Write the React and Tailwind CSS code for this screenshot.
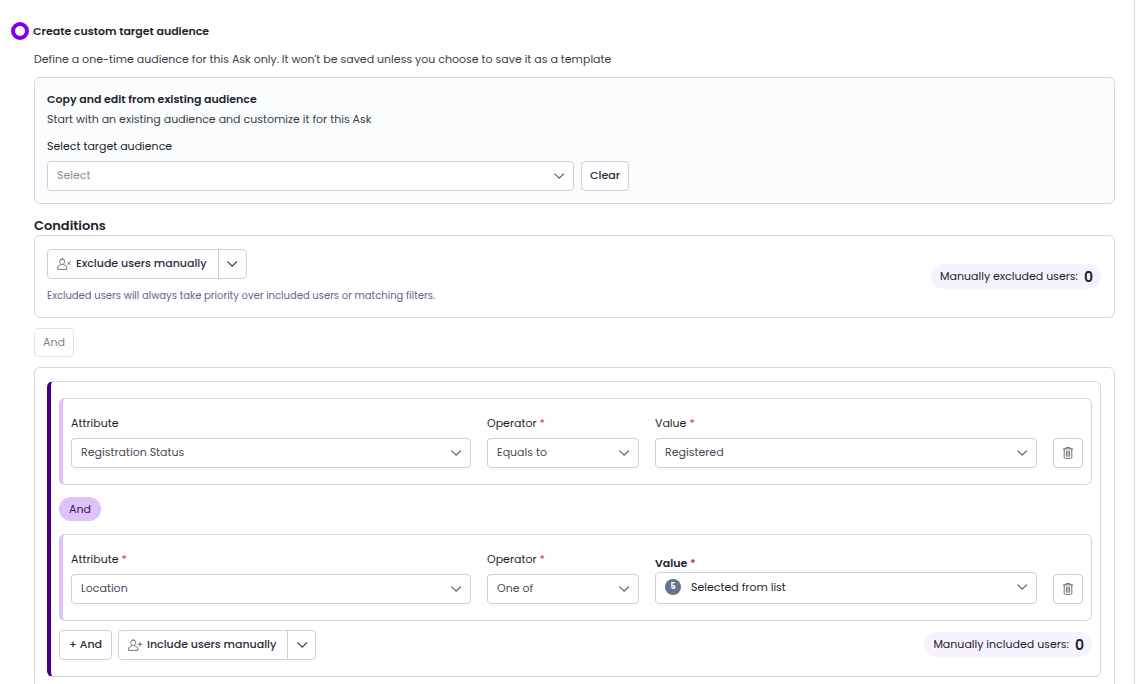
import React from "react";

function Chevron({ className = "" }) {
  return (
    <svg viewBox="0 0 12 12" className={`size-3 ${className}`} fill="none" stroke="currentColor" strokeWidth="1.2" strokeLinecap="round" strokeLinejoin="round" aria-hidden="true">
      <path d="M1.800 3.900 6.200 8.100l4.400-4.200" />
    </svg>
  );
}

function UserIcon({ mark }) {
  return (
    <svg viewBox="0 0 15 14" className="h-3.5 w-[15px] shrink-0 text-[#4b4f5c]" fill="none" stroke="currentColor" strokeWidth="0.8" strokeLinecap="round" strokeLinejoin="round" aria-hidden="true">
      <path d="M5.200 1.900a2.500 2.500 0 0 1 2.500 2.600c0 1.600-1.100 3-2.500 3s-2.500-1.400-2.500-3a2.500 2.500 0 0 1 2.500-2.600Z" />
      <path d="M3.700 7.800C1.900 8.300.6 9.300.6 11.100v1.300h9.200v-1.300c0-1.800-1.300-2.800-3.100-3.300" />
      {mark === "plus" ? <path d="M12 4.200v4M10 6.200h4" /> : <path d="m10.600 7.700 3-3M10.900 5.300l.8.700M12.700 6.900l.7.600" />}
    </svg>
  );
}

function TrashIcon() {
  return (
    <svg viewBox="0 0 12 14" className="h-3.5 w-3" fill="none" stroke="currentColor" strokeWidth="0.8" strokeLinecap="round" strokeLinejoin="round" aria-hidden="true">
      <path d="M1.500 2.900h9M4.200 2.700V1.500h3.600v1.200M2.200 3.100v8c0 .9.500 1.400 1.400 1.400h4.800c.9 0 1.400-.5 1.400-1.400v-8M4.400 5v5.400M6 5v5.400M7.600 5v5.400" />
    </svg>
  );
}

function Select({ id, value, options = [], muted = false }) {
  return (
    <div className="grid items-center">
      <select
        id={id}
        defaultValue={value}
        className={`col-start-1 row-start-1 h-[30px] w-full appearance-none rounded border border-[#cdd1d8] bg-white pr-8 pb-0.5 pl-[9px] text-[11px] ${muted ? "text-[#8b8f9a]" : "text-[#454b57]"}`}
      >
        {[value, ...options].map((option) => (
          <option key={option}>{option}</option>
        ))}
      </select>
      <Chevron className="pointer-events-none col-start-1 row-start-1 mr-[9px] justify-self-end text-[#555b66]" />
    </div>
  );
}

function Label({ htmlFor, required, bold, children }) {
  return (
    <label htmlFor={htmlFor} className={`block text-[11px] leading-[18px] text-[#1d1f27] ${bold ? "font-semibold" : "mb-1.5"}`}>
      {children}
      {required && <span className="text-[#e0245e]"> *</span>}
    </label>
  );
}

function SplitButton({ mark, children, menuLabel }) {
  return (
    <div className="flex h-[30px] rounded border border-[#cdd1d8] bg-white">
      <button type="button" className="flex items-center gap-1 pr-[11px] pl-[9px] text-[11px] font-medium text-[#2b2d42]">
        <UserIcon mark={mark} />
        <span className="pb-0.5">{children}</span>
      </button>
      <button type="button" aria-label={menuLabel} className="flex w-7 items-center justify-center border-l border-[#cdd1d8] text-[#33363f]">
        <Chevron />
      </button>
    </div>
  );
}

function CountPill({ label, count }) {
  return (
    <p className="flex h-[25px] items-center gap-1.5 rounded-full bg-[#f6f2ff] pr-2 pl-[9px] text-[11px] text-[#1d1b2e]">
      {label} <span className="text-sm font-semibold">{count}</span>
    </p>
  );
}

function RuleRow({ children }) {
  return (
    <div className="grid grid-cols-[400fr_152fr_382fr_30px] items-end gap-4 rounded-md border border-l-4 border-[#d5d8dd] border-l-[#dfc2f9] px-2 pt-[15px] pb-4">
      {children}
      <button type="button" aria-label="Delete condition" className="flex size-[30px] items-center justify-center rounded border border-[#cdd1d8] text-[#4b4f5c]">
        <TrashIcon />
      </button>
    </div>
  );
}

export default function App() {
  return (
    <div className="h-screen overflow-hidden bg-white pr-[3px] font-['Poppins','Inter',sans-serif] text-[#22242b]">
      <main className="min-h-full border-r border-[#d5d8dd] pr-[19px] pl-[34px]">
        <div className="-ml-6 flex items-center gap-1 pt-[21px]">
          <input
            id="custom-audience"
            type="radio"
            name="audience"
            defaultChecked
            className="ml-px size-[18px] appearance-none rounded-full border-[4px] border-[#7d00ea] bg-white"
          />
          <label htmlFor="custom-audience" className="text-[11px] leading-5 font-semibold">
            Create custom target audience
          </label>
        </div>
        <p className="mt-2 text-[11px] leading-5 text-[#3a3d45]">
          Define a one-time audience for this Ask only. It won't be saved unless you choose to save it as a template
        </p>

        <section className="mt-2 rounded-md border border-[#d3d7de] bg-[#fbfcfe] pt-[11px] pr-[13px] pb-3 pl-3">
          <h2 className="text-[11px] leading-5 font-semibold">Copy and edit from existing audience</h2>
          <p className="mb-2 text-[11px] leading-5 text-[#3a3d45]">Start with an existing audience and customize it for this Ask</p>
          <Label htmlFor="target">Select target audience</Label>
          <div className="flex gap-[7px]">
            <div className="w-1/2">
              <Select id="target" value="Select" muted />
            </div>
            <button type="button" className="h-[30px] rounded border border-[#cdd1d8] bg-white px-2 pb-0.5 text-[11px] font-medium text-[#2b2d42]">
              Clear
            </button>
          </div>
        </section>

        <h2 className="mt-3 text-[13px] leading-[19px] font-semibold">Conditions</h2>
        <section className="flex items-center justify-between rounded-md border border-[#d5d8dd] py-[13px] pr-[13px] pl-3">
          <div>
            <div className="flex">
              <SplitButton mark="cross" menuLabel="More exclude options">Exclude users manually</SplitButton>
            </div>
            <p className="mt-2 text-[10px] leading-[17px] text-[#63668a]">
              Excluded users will always take priority over included users or matching filters.
            </p>
          </div>
          <CountPill label="Manually excluded users:" count={0} />
        </section>

        <button type="button" disabled className="mt-2.5 block h-[29px] rounded border border-[#e1e4e8] px-2 text-[11px] text-[#7c818b]">
          And
        </button>

        <section className="mt-2.5 rounded-md border border-[#d5d8dd] py-[13px] pr-[13px] pl-3">
          <div className="rounded-md border border-l-4 border-[#d5d8dd] border-l-[#46007d] px-2 py-4">
            <RuleRow>
              <div>
                <Label htmlFor="attribute-1">Attribute</Label>
                <Select id="attribute-1" value="Registration Status" options={["Location"]} />
              </div>
              <div>
                <Label htmlFor="operator-1" required>Operator</Label>
                <Select id="operator-1" value="Equals to" options={["One of"]} />
              </div>
              <div>
                <Label htmlFor="value-1" required>Value</Label>
                <Select id="value-1" value="Registered" />
              </div>
            </RuleRow>

            <p className="mt-3 mb-[13px] flex h-6 w-fit items-center rounded-full bg-[#dfc2f9] px-2.5 text-[11px] text-[#2a2140]">And</p>

            <RuleRow>
              <div>
                <Label htmlFor="attribute-2" required>Attribute</Label>
                <Select id="attribute-2" value="Location" options={["Registration Status"]} />
              </div>
              <div>
                <Label htmlFor="operator-2" required>Operator</Label>
                <Select id="operator-2" value="One of" options={["Equals to"]} />
              </div>
              <div>
                <Label htmlFor="value-2" required bold>Value</Label>
                <button id="value-2" type="button" className="flex h-8 w-full items-center rounded border border-[#cdd1d8] pr-2 pb-0.5 pl-[9px] text-[11px] text-[#1d1f27]">
                  <span className="mr-2.5 flex size-4 items-center justify-center rounded-full bg-[#64748b] text-[8px] leading-4 font-bold text-white">5</span>
                  Selected from list
                  <Chevron className="ml-auto text-[#555b66]" />
                </button>
              </div>
            </RuleRow>

            <div className="mt-[9px] flex items-start justify-between">
              <div className="flex gap-1.5">
                <button type="button" className="h-[30px] rounded border border-[#cdd1d8] px-[9px] pb-0.5 text-[11px] font-medium text-[#2b2d42]">
                  + And
                </button>
                <SplitButton mark="plus" menuLabel="More include options">Include users manually</SplitButton>
              </div>
              <div className="pt-0.5">
                <CountPill label="Manually included users:" count={0} />
              </div>
            </div>
          </div>
        </section>
      </main>
    </div>
  );
}
